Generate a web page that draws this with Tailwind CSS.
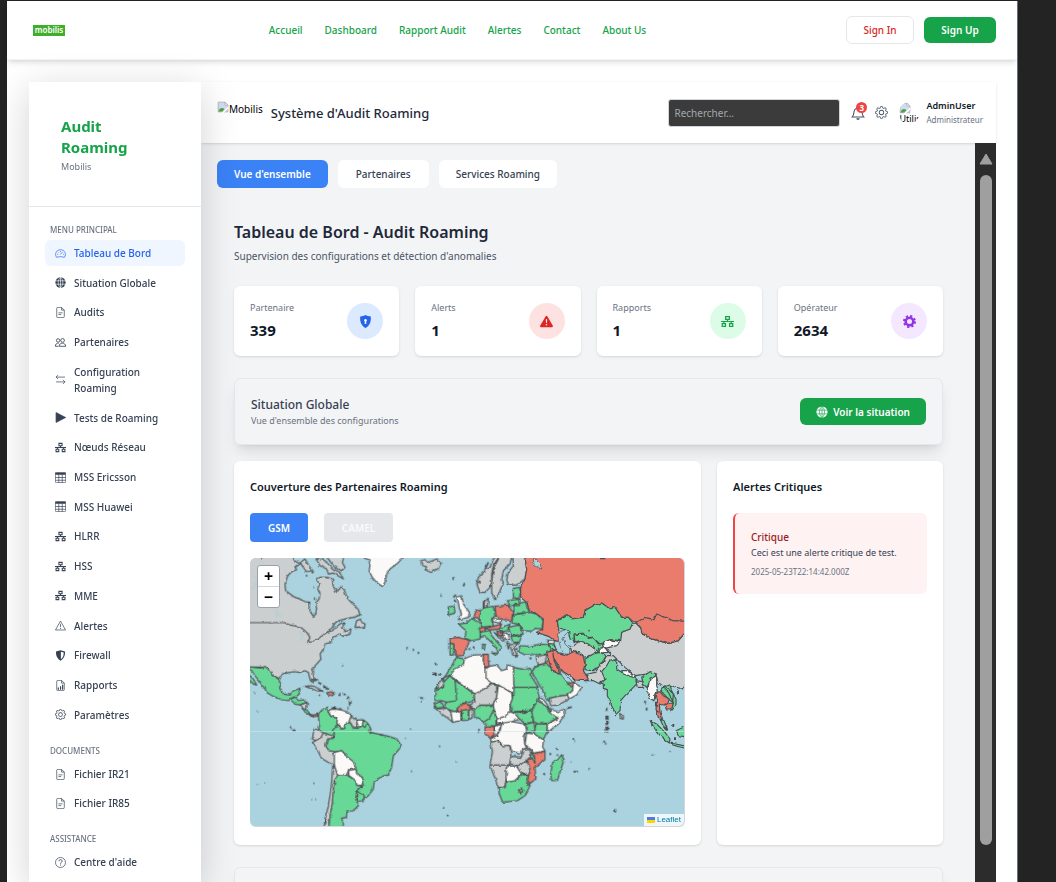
<!DOCTYPE html>
<html lang="fr">
<head>
  <meta charset="UTF-8" />
  <meta name="viewport" content="width=device-width, initial-scale=1.0"/>
  <title>Système d'Audit Roaming</title>
  <script src="https://cdn.jsdelivr.net/npm/@tailwindcss/browser@4"></script>
</head>
<body class="bg-[#232323] font-['Noto_Sans',sans-serif] text-[10px] leading-4 text-gray-700 h-screen overflow-hidden">

  <!-- Icons -->
  <svg class="hidden" aria-hidden="true">
    <symbol id="i-speed" viewBox="0 0 16 16"><path d="M2.2 13.5C-1 8.5 2 2.5 8 2.5s9 6 5.800 11Q8 11.500 2.200 13.500zM8 4.200v1.500M3.300 9h1.500M11.500 9h1.300M4.500 5.500l1 1M7.500 9.500l3.500-3.700" fill="none" stroke="currentColor"/></symbol>
    <symbol id="i-globe" viewBox="0 0 16 16"><circle cx="8" cy="8" r="7.500" fill="currentColor"/><path d="M8 0v16M0 5.500h16M0 10.500h16M8 .5C3.500 4 3.500 12 8 15.500M8 .5c4.500 3.500 4.500 11.500 0 15" fill="none" stroke="white" stroke-width=".9"/></symbol>
    <symbol id="i-globe-light" viewBox="0 0 16 16"><circle cx="8" cy="8" r="7.500" fill="currentColor"/><path d="M8 0v16M0 5.500h16M0 10.500h16M8 .5C3.500 4 3.500 12 8 15.500M8 .5c4.500 3.500 4.500 11.500 0 15" fill="none" stroke="#16a34a" stroke-width=".9"/></symbol>
    <symbol id="i-file" viewBox="0 0 16 16"><path d="M9.500.5H4A1.500 1.500 0 0 0 2.500 2v12A1.500 1.500 0 0 0 4 15.500h8a1.500 1.500 0 0 0 1.500-1.500V4.500zv4h4M5 8.500h6M5 11h4" fill="none" stroke="currentColor"/></symbol>
    <symbol id="i-people" viewBox="0 0 16 16"><g fill="none" stroke="currentColor" stroke-width="1.200"><circle cx="4.500" cy="5" r="2.500"/><circle cx="11" cy="5" r="2.700"/><path d="M5.500 9C2.500 8.700.5 10.500.5 13.500H5M6 13.500c0-6 9.500-6 9.500 0z"/></g></symbol>
    <symbol id="i-swap" viewBox="0 0 16 16"><path d="M14.500 4.500h-13l3-3m-3 3 3 3M1.500 11.500h13l-3-3m3 3-3 3" fill="none" stroke="currentColor"/></symbol>
    <symbol id="i-play" viewBox="0 0 16 16"><path d="M1.500.8v14.400L15.500 8z" fill="currentColor" stroke="currentColor" stroke-linejoin="round"/></symbol>
    <symbol id="i-net" viewBox="0 0 16 16"><path d="M5.700 2h4.600v3.500H5.700zM1.500 10.500h4V14h-4zM10.500 10.500h4V14h-4zM0 8h16M8 5.500V8M3.500 8v2.500M12.500 8v2.500" fill="none" stroke="currentColor" stroke-width="1.500"/></symbol>
    <symbol id="i-table" viewBox="0 0 16 16"><path d="M.5 2A1.500 1.500 0 0 1 2 .5h12A1.500 1.500 0 0 1 15.500 2v12a1.500 1.500 0 0 1-1.500 1.500H2A1.500 1.500 0 0 1 .5 14zM.5 8h15M.5 12h15M5.500 3v12.500M10.500 3v12.500" fill="none" stroke="currentColor"/><path d="M.5 1h15v3H.5z" fill="currentColor"/></symbol>
    <symbol id="i-warn" viewBox="0 0 16 16"><path d="M8 1.500 15.300 14.500H.7zM8 5.500v5M8 11.500v1.500" fill="none" stroke="currentColor" stroke-linejoin="round"/></symbol>
    <symbol id="i-warn-fill" viewBox="0 0 16 16"><path d="M8.982 1.566a1.130 1.130 0 0 0-1.960 0L.165 13.233c-.457.778.091 1.767.980 1.767h13.713c.889 0 1.438-.990.980-1.767zM8 5c.535 0 .954.462.900.995l-.350 3.507a.552.552 0 0 1-1.100 0L7.100 5.995A.905.905 0 0 1 8 5zm.002 6a1 1 0 1 1 0 2 1 1 0 0 1 0-2z" fill="currentColor"/></symbol>
    <symbol id="i-shield" viewBox="0 0 16 16"><path d="M8 .5 14.500 2C15 9 12 13 8 15.500 4 13 1 9 1.500 2z" fill="currentColor"/><path d="M8.500 2.500 12.700 3.500C12.800 8 11.500 11 8.500 13.300z" fill="white"/></symbol>
    <symbol id="i-shield-lock" viewBox="0 0 16 16"><path d="M8 0c1.500.8 4 1.500 6.500 1.800C15.200 9 12.500 13.300 8 16 3.500 13.300.800 9 1.500 1.800 4 1.500 6.500.8 8 0z" fill="currentColor"/><path d="M8 4.800a1.700 1.700 0 0 1 .8 3.200l.4 2.800H6.800L7.200 8A1.700 1.700 0 0 1 8 4.800z" fill="white"/></symbol>
    <symbol id="i-report" viewBox="0 0 16 16"><path d="M9.500.5H4A1.500 1.500 0 0 0 2.500 2v12A1.500 1.500 0 0 0 4 15.500h8a1.500 1.500 0 0 0 1.500-1.500V4.500zv4h4" fill="none" stroke="currentColor"/><path d="M4 11h1.700v3H4zM7.200 9h1.700v5H7.200zM10.300 7H12v7h-1.700z" fill="currentColor"/></symbol>
    <symbol id="i-gear" viewBox="0 0 16 16"><path fill="currentColor" d="M8 4.754a3.246 3.246 0 1 0 0 6.492 3.246 3.246 0 0 0 0-6.492zM5.754 8a2.246 2.246 0 1 1 4.492 0 2.246 2.246 0 0 1-4.492 0z"/><path fill="currentColor" d="M9.796 1.343c-.527-1.790-3.065-1.790-3.592 0l-.094.319a.873.873 0 0 1-1.255.520l-.292-.160c-1.640-.892-3.433.902-2.540 2.541l.159.292a.873.873 0 0 1-.520 1.255l-.319.094c-1.790.527-1.790 3.065 0 3.592l.319.094a.873.873 0 0 1 .520 1.255l-.160.292c-.892 1.640.901 3.434 2.541 2.540l.292-.159a.873.873 0 0 1 1.255.520l.094.319c.527 1.790 3.065 1.790 3.592 0l.094-.319a.873.873 0 0 1 1.255-.520l.292.160c1.640.893 3.434-.902 2.540-2.541l-.159-.292a.873.873 0 0 1 .520-1.255l.319-.094c1.790-.527 1.790-3.065 0-3.592l-.319-.094a.873.873 0 0 1-.520-1.255l.160-.292c.893-1.640-.902-3.433-2.541-2.540l-.292.159a.873.873 0 0 1-1.255-.520l-.094-.319zm-2.633.283c.246-.835 1.428-.835 1.674 0l.094.319a1.873 1.873 0 0 0 2.693 1.115l.291-.160c.764-.415 1.600.420 1.184 1.185l-.159.292a1.873 1.873 0 0 0 1.116 2.692l.318.094c.835.246.835 1.428 0 1.674l-.319.094a1.873 1.873 0 0 0-1.115 2.693l.160.291c.415.764-.420 1.600-1.185 1.184l-.291-.159a1.873 1.873 0 0 0-2.693 1.116l-.094.318c-.246.835-1.428.835-1.674 0l-.094-.319a1.873 1.873 0 0 0-2.692-1.115l-.292.160c-.764.415-1.600-.420-1.184-1.185l.159-.291A1.873 1.873 0 0 0 1.945 8.930l-.319-.094c-.835-.246-.835-1.428 0-1.674l.319-.094A1.873 1.873 0 0 0 3.060 4.377l-.160-.292c-.415-.764.420-1.600 1.185-1.184l.292.159a1.873 1.873 0 0 0 2.692-1.115l.094-.319z"/></symbol>
    <symbol id="i-cog" viewBox="0 0 16 16"><circle cx="8" cy="8" r="4.700" fill="none" stroke="currentColor" stroke-width="3.200"/><circle cx="8" cy="8" r="6.700" fill="none" stroke="currentColor" stroke-width="2.600" stroke-dasharray="2.600 2.660"/></symbol>
    <symbol id="i-help" viewBox="0 0 16 16"><circle cx="8" cy="8" r="7.300" fill="none" stroke="currentColor"/><path d="M5.700 6.200C5.700 3 10.500 3.200 10.300 6 10.200 7.800 8 7.800 8 9.800M8 11v1.500" fill="none" stroke="currentColor" stroke-width="1.200"/></symbol>
    <symbol id="i-bell" viewBox="0 0 16 16"><path d="M8 1v1.500M1.500 12.500h13C13 11 12.800 9 12.500 6.500 12 1.200 4 1.200 3.500 6.500 3.200 9 3 11 1.500 12.500z" fill="none" stroke="currentColor" stroke-width="1.200"/><path d="M6 14h4a2 2 0 0 1-4 0z" fill="currentColor"/></symbol>
    <symbol id="i-broken" viewBox="0 0 16 16"><path d="M1.500 1.500h9l4 4v9h-13z" fill="#cfdcf5" stroke="#a8abb0"/><path d="M10.500 1.500v4h4z" fill="white" stroke="#a8abb0"/><path d="M2 14c1-5 5-6 8-3l-3 3z" fill="#53a23c"/><path d="M6 16 15 7v3l-6 6z" fill="white"/></symbol>
  </svg>

  <div class="ml-[7px] mr-[38px] mt-px h-full bg-white border-r border-gray-500 flex flex-col">

    <!-- Top navigation -->
    <header class="h-[59px] shrink-0 pl-[26px] pr-[21px] flex items-center justify-between shadow-md border-b border-gray-100">
      <a href="#" class="w-8 h-[11px] bg-[#3fae29] text-white text-[8px] leading-[10px] text-center font-semibold">mobilis</a>
      <nav class="flex gap-[22px] font-medium text-[#16a34a] ml-1 text-[10px]">
        <a href="#">Accueil</a>
        <a href="#">Dashboard</a>
        <a href="#">Rapport Audit</a>
        <a href="#">Alertes</a>
        <a href="#">Contact</a>
        <a href="#">About Us</a>
      </nav>
      <div class="flex items-center gap-[10px]">
        <button class="h-7 w-17 rounded-md border border-gray-200 font-medium text-[#dc2626]">Sign In</button>
        <button class="h-[26px] w-18 rounded-md bg-[#16a34a] font-semibold text-white">Sign Up</button>
      </div>
    </header>

    <div class="flex-1 min-h-0 flex pl-[22px] pr-[21px] pt-[22px]">

      <!-- Sidebar -->
      <aside class="relative z-10 w-[172px] shrink-0 bg-white shadow-[0_8px_36px_rgba(0,0,0,0.18)]">
        <div class="h-[125px] pl-8 pt-[34px] border-b border-gray-200">
          <h1 class="w-24 text-[15px] leading-[21px] font-bold text-[#16a34a]">Audit Roaming</h1>
          <p class="text-[9px] leading-[18px] text-gray-500">Mobilis</p>
        </div>
        <nav class="px-4 pt-4 font-medium">
          <h2 class="px-[5px] mb-[3px] text-[8px] leading-[14px] text-gray-500">MENU PRINCIPAL</h2>
          <div class="h-[488px] flex flex-col justify-between">
            <a href="#" class="flex items-center gap-2 rounded-md pl-[10px] py-[5px] bg-[#eff6ff] text-[#2563eb]"><svg class="size-[11px]"><use href="#i-speed"/></svg>Tableau de Bord</a>
            <a href="#" class="flex items-center gap-2 rounded-md pl-[10px] py-[5px]"><svg class="size-[11px]"><use href="#i-globe"/></svg>Situation Globale</a>
            <a href="#" class="flex items-center gap-2 rounded-md pl-[10px] py-[5px]"><svg class="size-[11px]"><use href="#i-file"/></svg>Audits</a>
            <a href="#" class="flex items-center gap-2 rounded-md pl-[10px] py-[5px]"><svg class="size-[11px]"><use href="#i-people"/></svg>Partenaires</a>
            <a href="#" class="flex items-center gap-2 rounded-md pl-[10px] py-[5px]"><svg class="size-[11px] shrink-0"><use href="#i-swap"/></svg><span class="w-20">Configuration Roaming</span></a>
            <a href="#" class="flex items-center gap-2 rounded-md pl-[10px] py-[5px]"><svg class="size-[11px]"><use href="#i-play"/></svg>Tests de Roaming</a>
            <a href="#" class="flex items-center gap-2 rounded-md pl-[10px] py-[5px]"><svg class="size-[11px]"><use href="#i-net"/></svg>Nœuds Réseau</a>
            <a href="#" class="flex items-center gap-2 rounded-md pl-[10px] py-[5px]"><svg class="size-[11px]"><use href="#i-table"/></svg>MSS Ericsson</a>
            <a href="#" class="flex items-center gap-2 rounded-md pl-[10px] py-[5px]"><svg class="size-[11px]"><use href="#i-table"/></svg>MSS Huawei</a>
            <a href="#" class="flex items-center gap-2 rounded-md pl-[10px] py-[5px]"><svg class="size-[11px]"><use href="#i-net"/></svg>HLRR</a>
            <a href="#" class="flex items-center gap-2 rounded-md pl-[10px] py-[5px]"><svg class="size-[11px]"><use href="#i-net"/></svg>HSS</a>
            <a href="#" class="flex items-center gap-2 rounded-md pl-[10px] py-[5px]"><svg class="size-[11px]"><use href="#i-net"/></svg>MME</a>
            <a href="#" class="flex items-center gap-2 rounded-md pl-[10px] py-[5px]"><svg class="size-[11px]"><use href="#i-warn"/></svg>Alertes</a>
            <a href="#" class="flex items-center gap-2 rounded-md pl-[10px] py-[5px]"><svg class="size-[11px]"><use href="#i-shield"/></svg>Firewall</a>
            <a href="#" class="flex items-center gap-2 rounded-md pl-[10px] py-[5px]"><svg class="size-[11px]"><use href="#i-report"/></svg>Rapports</a>
            <a href="#" class="flex items-center gap-2 rounded-md pl-[10px] py-[5px]"><svg class="size-[11px]"><use href="#i-gear"/></svg>Paramètres</a>
          </div>
          <h2 class="px-[5px] mt-4 mb-[3px] text-[8px] leading-[14px] text-gray-500">DOCUMENTS</h2>
          <div class="flex flex-col gap-[3px]">
            <a href="#" class="flex items-center gap-2 rounded-md pl-[10px] py-[5px]"><svg class="size-[11px]"><use href="#i-file"/></svg>Fichier IR21</a>
            <a href="#" class="flex items-center gap-2 rounded-md pl-[10px] py-[5px]"><svg class="size-[11px]"><use href="#i-file"/></svg>Fichier IR85</a>
          </div>
          <h2 class="px-[5px] mt-4 mb-[3px] text-[8px] leading-[14px] text-gray-500">ASSISTANCE</h2>
          <a href="#" class="flex items-center gap-2 rounded-md pl-[10px] py-[5px]"><svg class="size-[11px]"><use href="#i-help"/></svg>Centre d'aide</a>
        </nav>
      </aside>

      <div class="flex-1 min-w-0 flex flex-col">
        <!-- Page header -->
        <div class="relative h-[61px] shrink-0 pl-4 pr-[13px] flex items-center bg-white shadow">
          <div class="flex text-black mb-2"><svg class="size-3"><use href="#i-broken"/></svg>Mobilis</div>
          <h2 class="ml-2 text-[13px] font-medium text-gray-800">Système d'Audit Roaming</h2>
          <input type="text" aria-label="Rechercher" placeholder="Rechercher..." class="ml-auto w-[172px] h-7 px-[5px] rounded-[3px] border border-gray-300 bg-[#3b3b3b] text-[10px] text-white placeholder:text-[#a3a8ad]"/>
          <button aria-label="Notifications" class="relative ml-[11px] text-gray-600"><svg class="size-[14px]"><use href="#i-bell"/></svg>
            <span class="absolute -top-1 left-[5px] size-[11px] rounded-full bg-[#ef4444] text-white text-[8px] leading-[11px] font-bold">3</span>
          </button>
          <button aria-label="Réglages" class="ml-[10px] text-gray-600"><svg class="size-[13px]"><use href="#i-gear"/></svg></button>
          <div class="ml-[11px] w-5 h-[22px] rounded-full overflow-hidden text-[9px] leading-[9px] text-black"><svg class="size-3"><use href="#i-broken"/></svg>Utilis</div>
          <div class="ml-[7px]">
            <p class="text-[9px] leading-[14px] font-semibold text-gray-900">AdminUser</p>
            <p class="text-[8px] leading-[13px] text-gray-500">Administrateur</p>
          </div>
        </div>

        <div class="flex-1 min-h-0 flex">
          <main class="flex-1 min-w-0 overflow-hidden bg-gray-100">
            <!-- Tabs -->
            <div class="flex gap-[10px] pt-[17px] pl-4 font-medium">
              <button class="h-7 px-[17px] rounded-md bg-[#3b82f6] text-white font-semibold">Vue d'ensemble</button>
              <button class="h-7 px-[18px] rounded-md bg-white">Partenaires</button>
              <button class="h-7 px-[17px] rounded-md bg-white">Services Roaming</button>
            </div>

            <div class="pl-[33px] pr-8 pt-8">
              <h2 class="text-[16px] leading-6 font-semibold text-gray-800">Tableau de Bord - Audit Roaming</h2>
              <p class="mt-1 text-[10px] text-gray-600">Supervision des configurations et détection d'anomalies</p>

              <!-- Stats -->
              <div class="grid grid-cols-4 gap-4 mt-[22px]">
                <div class="flex items-center justify-between h-[70px] px-4 rounded-md bg-white shadow">
                  <div><p class="text-[9px] text-gray-500">Partenaire</p><p class="mt-[2px] text-[15px] leading-6 font-bold text-gray-900">339</p></div>
                  <span class="size-9 rounded-full bg-[#dbeafe] text-[#2563eb] flex items-center justify-center"><svg class="size-[13px]"><use href="#i-shield-lock"/></svg></span>
                </div>
                <div class="flex items-center justify-between h-[70px] px-4 rounded-md bg-white shadow">
                  <div><p class="text-[9px] text-gray-500">Alerts</p><p class="mt-[2px] text-[15px] leading-6 font-bold text-gray-900">1</p></div>
                  <span class="size-9 rounded-full bg-[#fee2e2] text-[#dc2626] flex items-center justify-center"><svg class="size-[13px]"><use href="#i-warn-fill"/></svg></span>
                </div>
                <div class="flex items-center justify-between h-[70px] px-4 rounded-md bg-white shadow">
                  <div><p class="text-[9px] text-gray-500">Rapports</p><p class="mt-[2px] text-[15px] leading-6 font-bold text-gray-900">1</p></div>
                  <span class="size-9 rounded-full bg-[#dcfce7] text-[#16a34a] flex items-center justify-center"><svg class="size-[13px]"><use href="#i-net"/></svg></span>
                </div>
                <div class="flex items-center justify-between h-[70px] px-4 rounded-md bg-white shadow">
                  <div><p class="text-[9px] text-gray-500">Opérateur</p><p class="mt-[2px] text-[15px] leading-6 font-bold text-gray-900">2634</p></div>
                  <span class="size-9 rounded-full bg-[#f3e8ff] text-[#9333ea] flex items-center justify-center"><svg class="size-[13px]"><use href="#i-cog"/></svg></span>
                </div>
              </div>

              <!-- Situation globale -->
              <div class="mt-[22px] h-[67px] px-4 flex items-center justify-between rounded-md border border-gray-200 shadow-lg">
                <div>
                  <h3 class="text-[12px] leading-[17px] font-medium text-gray-700">Situation Globale</h3>
                  <p class="text-[9px] leading-[15px] text-gray-500">Vue d'ensemble des configurations</p>
                </div>
                <button class="h-[27px] px-4 rounded-md bg-[#16a34a] text-white font-semibold flex items-center gap-[5px]"><svg class="size-3"><use href="#i-globe-light"/></svg>Voir la situation</button>
              </div>

              <div class="grid grid-cols-[1fr_226px] gap-4 mt-4">
                <section class="h-[384px] px-4 pt-4 rounded-md bg-white shadow">
                  <h3 class="text-[11px] leading-5 font-semibold text-gray-900">Couverture des Partenaires Roaming</h3>
                  <div class="flex gap-4 mt-4 font-semibold text-white">
                    <button class="h-[29px] w-[58px] rounded-[4px] bg-[#3b82f6]">GSM</button>
                    <button class="h-[29px] w-[69px] rounded-[4px] bg-gray-200 text-gray-50">CAMEL</button>
                  </div>

                  <!-- Map -->
                  <div class="relative mt-4 h-[269px] rounded-md overflow-hidden border-r border-b border-gray-300 bg-[#aad3df]">
                    <svg class="w-full h-full" viewBox="0 0 1302 804" preserveAspectRatio="xMidYMid slice" role="img" aria-label="Carte de couverture">
                      <defs><filter id="coast" x="0" y="0" width="100%" height="100%"><feTurbulence type="fractalNoise" baseFrequency="0.07" numOctaves="2" seed="4"/><feDisplacementMap in="SourceGraphic" scale="9" xChannelSelector="R" yChannelSelector="G"/></filter></defs>
                      <g filter="url(#coast)" stroke="#4b5052" stroke-width="3.500" stroke-linejoin="round">
                        <!-- North America -->
                        <g transform="translate(-15 -177)" fill="#cbcfd0">
                          <path d="M0 160H140L148 185 165 195 150 205 155 212 140 218 128 230 120 255 122 275 135 285 150 295 165 300 180 308 195 310 192 325 197 340 205 352 213 345 215 330 212 312 222 300 225 285 218 270 222 255 215 240 225 235 245 235 262 240 265 262 275 280 290 262 300 278 305 295 318 310 330 320 340 332 345 348 325 355 300 360 280 365 270 372 262 385 245 400 262 395 275 382 290 372 300 372 292 385 300 395 318 390 315 405 295 412 285 405 265 415 260 430 240 435 235 450 225 465 228 480 215 495 200 510 205 525 208 545 202 550 195 540 190 520 180 515 165 520 145 518 125 522 110 525 105 540 85 530 75 515 60 505 0 503z"/>
                          <path d="M0 371H118L135 378 165 383 185 400 195 415 188 430 205 428 225 415 245 400" fill="none"/>
                          <path d="M335 365 348 360 350 370 360 375 358 388 345 384 330 385zM213 178 235 183 250 195 265 210 285 220 295 240 285 234 265 222 250 225 245 210 225 200zM240 165H298L292 190 300 205 290 215 268 203 255 187zM165 190 180 180 190 198 203 215 185 218 175 205z"/>
                          <path d="M350 160 358 177 372 182 375 200 372 215 382 235 395 250 412 262 420 250 425 225 435 210 455 195 470 180 485 160z" fill="#faf9f8"/>
                          <path d="M528 185 540 182 550 190 575 180 588 192 580 208 558 220 540 212 545 203 530 200z"/>
                          <path d="M183 230h4M200 220h6M205 265h2M210 295v8M46 178h3M484 447h4M502 453h5M518 462h5M293 500h2M570 495h4M562 524h12M586 290h3M626 235v5" stroke-width="6"/>
                          <path d="M90 330l8 12 10 10M98 345l-5 10M165 425l8-15-6-12M20 270l16-20M25 235h12" stroke="#a8cedb" stroke-width="7" fill="none" opacity=".6"/>
                        </g>
                        <!-- Central and South America -->
                        <g transform="translate(-15 303)" fill="#68d897">
                          <path d="M0 23 50 27 60 22 75 35 85 50 103 62 105 90 115 105 135 108 145 95 165 88 163 105 150 115 140 118 130 125 110 122 85 112 65 100 60 90 45 70 30 50 20 35zM0 38 15 50 25 60 35 78 25 75 10 60zM135 120 150 112 160 125 175 122 185 130 165 138 150 135zM172 148 185 152 195 165 185 165z"/>
                          <path d="M165 138 187 130 185 152 172 148zM180 82 200 80 220 88 235 97 215 95 200 88z" fill="#cbcfd0"/>
                          <path d="M190 165 205 168 220 165 218 172 200 173zM245 102 257 98 270 103 262 110 250 108z" fill="#ea7b6e"/>
                          <path d="M220 165 232 152 248 148 250 160 258 172 278 178 275 190 278 200 265 208 268 225 265 238 250 225 235 222 218 212 222 195z"/>
                          <path d="M248 155 262 150 285 152 305 158 318 168 318 185 310 195 298 198 300 208 288 210 283 200 275 192 278 178 258 172zM335 183H355L352 200 338 205z" fill="#faf9f8"/>
                          <path d="M318 170 330 178 335 190 338 208 325 207 318 195 312 188zM207 210 218 212 235 222 228 235 212 245 202 240zM212 245 228 235 235 222 262 230 265 240 248 240 242 260 252 275 268 278 272 300 268 320 250 310 230 298 218 275 202 250z" fill="#cbcfd0"/>
                          <path d="M355 183 368 193 360 205 352 200zM265 238 268 225 265 208 285 200 288 210 300 208 298 198 315 190 325 207 338 208 352 200 360 205 368 193 378 210 375 220 400 225 430 232 455 240 466 255 463 270 445 290 440 325 430 348 410 352 388 368 385 390 370 410 358 420 350 410 335 398 355 378 350 365 352 355 335 345 332 325 325 312 310 300 300 285 290 275 268 278 252 275 242 260 248 240z"/>
                          <path d="M268 280 290 275 300 288 325 308 333 330 310 335 305 348 280 347 272 335 268 315zM310 332 333 330 335 345 352 355 352 378 335 380 332 365 312 350z" fill="#faf9f8"/>
                          <path d="M280 347 305 348 332 365 335 380 350 380 335 398 332 420 340 440 325 455 305 460 305 475 290 478 295 495V520H248L255 470 262 430 265 390 270 360zM335 398 358 408 355 425 335 428z"/>
                          <path d="M263 320 272 330 278 350 268 365 265 390 262 430 255 470 250 520H236L240 480 248 450 255 410 260 370z" fill="#cbcfd0"/>
                          <path d="M205 60l12 4M220 70l10 6M235 80l10 8M240 85l12 6M220 109h5M280 108h8M295 106h8M308 112l4 8M314 125v14M312 145l-3 5M260 147h12M280 150h10M135 205l4 5M142 214h8M36 157h2M26 103h4M36 377h2M58 374h2M205 373h3M200 422h2M212 422h2M498 337h3M583 262h2M633 308h2M480 238h2M495 210h3M522 117h12M528 128h4M595 446h2M607 469h3M242 480v16M370 212l8 12M405 228h9M195 66l10-4" stroke-width="5"/>
                        </g>
                        <!-- Europe -->
                        <g transform="translate(540 -27)" fill="#68d897">
                          <path d="M215 10 190 30 180 55 165 65 145 85 140 105 150 130 165 130 180 115 185 100 190 60zM185 75 190 50 215 10H248L240 45 220 65 215 90 220 100 208 130 195 155 185 130zM248 10H282L290 60 285 90 260 108 235 108 230 90 235 70 250 50zM160 160 175 148 172 172 160 175z" fill="#cbcfd0"/>
                          <path d="M250 118 270 115V135L265 150 250 145zM232 155 270 150 268 170 240 170zM252 168 285 158 298 190 250 195zM250 198 300 190 320 195 340 215 335 240 315 238 300 250 280 245 265 225 245 222zM150 182 165 176 190 172 195 200 185 210 190 230 155 235 148 210zM85 225 110 222 125 208 152 225 150 270 125 275 105 268 108 245zM150 250 180 245 185 260 215 295 205 310 195 290 165 262 152 265zM235 235 265 228 280 255 245 260zM208 240 240 225 232 245 212 248zM243 262 275 260 268 280 248 280zM268 290 300 292 330 285 360 287 365 305 350 315 310 317 285 318 270 310zM60 282 72 285 70 318 60 318zM55 175 72 170 75 192 55 198zM310 355 330 345 335 360 318 372zM158 285 165 288 163 303 157 300zM185 312 203 312 200 320zM230 280 240 285 235 300z"/>
                          <path d="M195 172 235 168 248 190 245 215 215 210 198 200zM165 238 190 232 215 225 208 240 180 243zM130 208 140 185 150 182 150 215 140 205zM148 237 168 235 165 247 150 248zM60 268 85 265 120 275 110 295 100 318 80 322 72 305 72 285 60 282zM345 345 362 325 375 345 395 365V400L355 375zM200 246 215 250 218 262 205 258z" fill="#ea7b6e"/>
                          <path d="M185 208 215 212 210 222 190 218zM85 160 80 145 95 140 100 165 118 190 115 205 85 212 95 195 88 178zM350 273 375 275 370 285 355 283zM215 250 235 255 238 270 228 272z" fill="#faf9f8"/>
                          <path d="M192 250 205 258 225 275 215 276zM240 288 265 282 250 296 262 320 248 318zM318 322 350 317 345 342 325 348z" fill="#cbcfd0"/>
                          <path d="M70 85v8M104 102l-4 10M70 145l8-8M72 152l6 8M115 300h6M128 295h6M255 322h10M295 328h10M255 300h8M262 308h6M162 155v18M150 95l-6 10M175 40l-10 22M14 346h4M8 375h12M24 377h8" stroke-width="5"/>
                        </g>
                        <!-- Africa and southern Asia -->
                        <g transform="translate(540 333)" fill="#68d897">
                          <path d="M80-35 103-30 100-12 75 5 60 18 35 30 15 64 30 42 50 15 68-15zM15 62 40 55 42 38 60 20 75 35 80 95 50 100 35 95 15 95zM75 35 92 45 132 75 135 90 118 100 100 103 82 118 78 128 50 120 45 105 50 100 80 95zM12 105 35 97 42 115 20 118zM95 122 115 120V153L96 155zM250-5 275 0 300-2 308 10 300 15 325 55H252zM137 110 155 108 190 110 192 120 178 148 160 160 148 148 133 145V125zM192 120 198 150V170H168L160 160 178 148zM252 55H320L328 85 320 95 308 118 285 130 255 130 245 125 240 105 247 90zM243 128 305 125 310 160 285 163 268 150zM320 95 340 105 360 128 385 145 355 162 325 165 312 158 305 130zM318 165H352L350 190 340 212 312 195zM288 165 312 160 315 185 288 192z"/>
                          <path d="M28 40 42 26 40 50 20 65zM18 120 50 118 62 128 68 160 50 145 35 135zM117 125 128 118 126 148 117 150zM132 75 170 55 185 45 200 50V85L188 108H150L135 120 118 108 135 100zM183 218 205 217 218 230 240 228 243 265 238 288H180L187 250zM243 262 275 265 278 240 300 238 303 262 285 278 265 290 240 285zM265 290 288 278 300 290 298 315 280 315 262 300zM180 288H238L240 293 230 295 228 330 225 358 205 355 190 315z" fill="#cbcfd0"/>
                          <path d="M62 128 92 128 93 155 68 160zM100-12 103-30 130-42 160-43V-25L168 0V30L185 42 170 55 135 75 60 20 75 0zM178-8 200-12 215 5 230 0 232-12 250-8 252 68 245 72 205 48 185 42 168 30V0zM205 48 245 70 247 90 240 105V128L225 142 200 150 192 120 190 108 200 85zM200 150 225 142 240 128 255 135 268 150 245 158 218 162 200 165zM325 90 335 85 350 105 360 122 340 105zM362 122 385 128 405 120V135L385 165 352 190V165L385 148 365 135zM195 172 215 165 210 185 200 200 182 210 193 195zM200 198 218 162 245 158 285 165 290 185 282 200 284 225 290 238 278 240 275 252 245 248 240 228 218 230 205 215 183 218 182 210zM290 192 312 195 340 212 338 235 345 245 312 253 300 240 285 225zM230 293 258 290 275 315 255 335 232 345 228 325z" fill="#faf9f8"/>
                          <path d="M82 118 100 103 118 110 125 118 95 125 84 130zM160-44H175V-25L178-8 168-5 160-25zM165 175 192 172 193 195 180 208 165 195zM312 253 345 247V272L315 295 318 330 298 345 293 335 300 300 288 272 305 268 315 280z" fill="#ea7b6e"/>
                          <path d="M303 240 312 265 315 283 305 270zM205 355 225 358 228 340 255 335 275 317 292 318 295 345 300 350 285 380 262 395 218 400 208 375zM395 257 402 272 382 335H365L362 315 368 280 385 270z"/>
                          <path d="M265 363 275 357 282 365 272 372zM290 340h8v8h-8z" fill="#8f9795"/>
                          <path d="M315-5 350-15 375 5 400 20 415 45 430 52 428 65 412 78 385 82 360 88 352 95 335 60 315 25 305 10z"/>
                          <path d="M358 88 385 82 412 78 418 90 385 108 362 110zM572 133 580 140V150L570 148z" fill="#cbcfd0"/>
                          <path d="M430 40 455 55 440 78 418 90 412 78 428 65z" fill="#faf9f8"/>
                          <path d="M412 45 433 38 428 52z" fill="#ea7b6e"/>
                          <path d="M410 118l15-4M430 207v6M434 218h2M358 255h6M376 240h6M380 258h4M340 312l5 6M422 278h3M430 308h14M475 300h3M530 118v8M524 215l-4 8M527 222v4M40 415v3M53 438v3M27 232h2M78 278h2M556 420v10M668 256v3M718 246h4M645 95v8M650 115v10M14 110v10M148 180l-6 12" stroke-width="5"/>
                          <path d="M531 140v50" stroke-width="10" stroke-dasharray="12 4"/>
                        </g>
                        <!-- Asia -->
                        <g transform="translate(900 -27)">
                          <path d="M-78 5-70 60-75 90-88 115V145L-70 160-62 185-40 195-20 210-22 240-40 250-5 262 15 275 28 278 35 265 25 240 22 215 50 197 65 210 100 205 105 185 130 170 155 162 180 180 195 175 215 205 235 205 250 218 430 225V5z" fill="#ea7b6e"/>
                          <path d="M210 275 215 250 240 240 245 225 258 222 275 240 300 268 355 283 385 275 402 255 430 250V415L402 415 385 418 360 408 345 415 325 405 320 385 310 372 290 375 255 380 225 355 210 340 190 325 168 298z" fill="#cbcfd0"/>
                          <path d="M258 222 285 205 312 212 320 195 345 205 370 215 430 218V250L402 255 385 275 355 283 325 275 300 268 275 250 272 235z" fill="#ea7b6e"/>
                          <path d="M22 215 50 197 65 210 100 205 105 185 130 170 155 162 180 180 195 175 215 205 235 205 248 222 240 240 215 250 212 275 180 272 150 285 128 265 112 265 98 252 72 255 75 280 60 270 55 245 38 240 25 235zM72 258 100 255 115 268 130 265 145 285 165 285 145 310 110 285 90 275 72 280z" fill="#68d897"/>
                          <path d="M72 290 90 275 115 285 145 308 125 318 105 325 90 312 65 308 60 290zM115 375 135 370 155 345 170 320 190 320 200 330 180 350 178 375 160 400 150 405 130 395H108z" fill="#cbcfd0"/>
                          <path d="M160 280 180 272 212 278 200 290 165 298zM145 298 165 295 175 310 150 312z" fill="#faf9f8"/>
                          <path d="M105 330 130 315 150 310 165 318 168 322 150 350 130 365 105 362zM-5 285 12 285 20 305 5 300z" fill="#68d897"/>
                          <path d="M8 300 20 310 50 318 70 308 100 322 105 345 100 365 115 390 105 395 75 393 60 380 40 368 25 350 10 325zM-10 310 8 305 12 335 25 360 28 375 5 365z" fill="#ea7b6e"/>
                          <path d="M22 255 50 240 55 248 38 265 45 285 60 300 58 315 40 315 30 290z" fill="#aad3df" stroke-width="2"/>
                          <path d="M28 363 45 375 60 390 68 402 50 398 36 380zM-50 25-30 45-25 60-48 50z" fill="#aad3df" stroke-width="2"/>
                          <path d="M115 245h4M150 28h18" stroke-width="5"/>
                        </g>
                        <g transform="translate(540 333)" fill="#68d897">
                          <path d="M520 45 512 40 525 30 515 8 530-10 540-28 560-20V0L575 10 618 25 620 45 610 55 585 80 572 95 570 125 557 137 545 110 532 80V62L520 58zM635 25 660 8 680 15 665 35 650 55 640 45zM692 65 705 50 730 75 728 100 715 90zM700 55 720 48 725 65 738 90V110L722 128 730 100 715 70zM690 150 702 155 712 180 700 172zM660 155 680 165 705 190 720 210 718 222 695 205 675 180zM720 222 775 232V240L725 228zM738 185 775 168V205L745 200z"/>
                          <path d="M575 5 590 5 618 20 610 25 580 15zM660 30 680 20V50L685 65 675 75 672 95 660 88 650 65z" fill="#faf9f8"/>
                          <path d="M618 35 638 38 640 55 622 55zM740 70 745 65 745 75z" fill="#cbcfd0"/>
                          <path d="M675 75 690 68 700 80 718 90 712 105 700 108 688 105 690 130 698 150 685 145 678 120 680 95zM705 105 730 102 725 120 708 120z" fill="#ea7b6e"/>
                          <path d="M678 98v14M682 125v8M705 178l8 6M730 165v6M735 205v10" stroke-width="6"/>
                        </g>
                      </g>
                      <path d="M0 520H1302" stroke="#cbe6ee" stroke-width="2" opacity=".6"/>
                    </svg>
                    <div class="absolute top-[7px] left-[7px] w-[23px] rounded-[3px] border border-gray-400 bg-white text-black text-[16px] leading-5 font-bold flex flex-col text-center overflow-hidden">
                      <button aria-label="Zoom avant" class="h-[21px] border-b border-gray-300">+</button>
                      <button aria-label="Zoom arrière" class="h-5">−</button>
                    </div>
                    <a href="#" class="absolute bottom-0 right-0 h-3 px-[3px] bg-white/80 flex items-center gap-[2px] text-[8px] text-[#0078a8] font-['Liberation_Sans',sans-serif]">
                      <svg class="w-2 h-[6px]" viewBox="0 0 8 6"><path d="M0 0h8v3H0z" fill="#4c7be1"/><path d="M0 3h8v3H0z" fill="#ffd500"/></svg>Leaflet
                    </a>
                  </div>
                </section>

                <section class="h-[384px] p-4 rounded-md bg-white shadow">
                  <h3 class="text-[11px] leading-5 font-semibold text-gray-900">Alertes Critiques</h3>
                  <div class="mt-4 h-[81px] pl-4 pt-4 rounded-md border-l-2 border-[#ef4444] bg-[#fef2f2]">
                    <p class="font-medium text-[#991b1b]">Critique</p>
                    <p class="text-[9px] text-gray-700">Ceci est une alerte critique de test.</p>
                    <p class="mt-[3px] text-[8px] leading-4 text-gray-500">2025-05-23T22:14:42.000Z</p>
                  </div>
                </section>
              </div>

              <div class="mt-[22px] h-20 rounded-md border border-gray-200 shadow-lg"></div>
            </div>
          </main>

          <!-- Scrollbar -->
          <div class="relative w-[21px] shrink-0 bg-[#2c2c2c] flex flex-col items-center pt-[10px]">
            <svg class="w-[14px] h-3" viewBox="0 0 14 12"><path d="M7 1 13 11H1z" fill="#9f9f9f" stroke="#9f9f9f" stroke-linejoin="round"/></svg>
            <div class="mt-[10px] mb-[38px] w-3 flex-1 rounded-full bg-[#9f9f9f]"></div>
          </div>
        </div>
      </div>
    </div>
  </div>
</body>
</html>
